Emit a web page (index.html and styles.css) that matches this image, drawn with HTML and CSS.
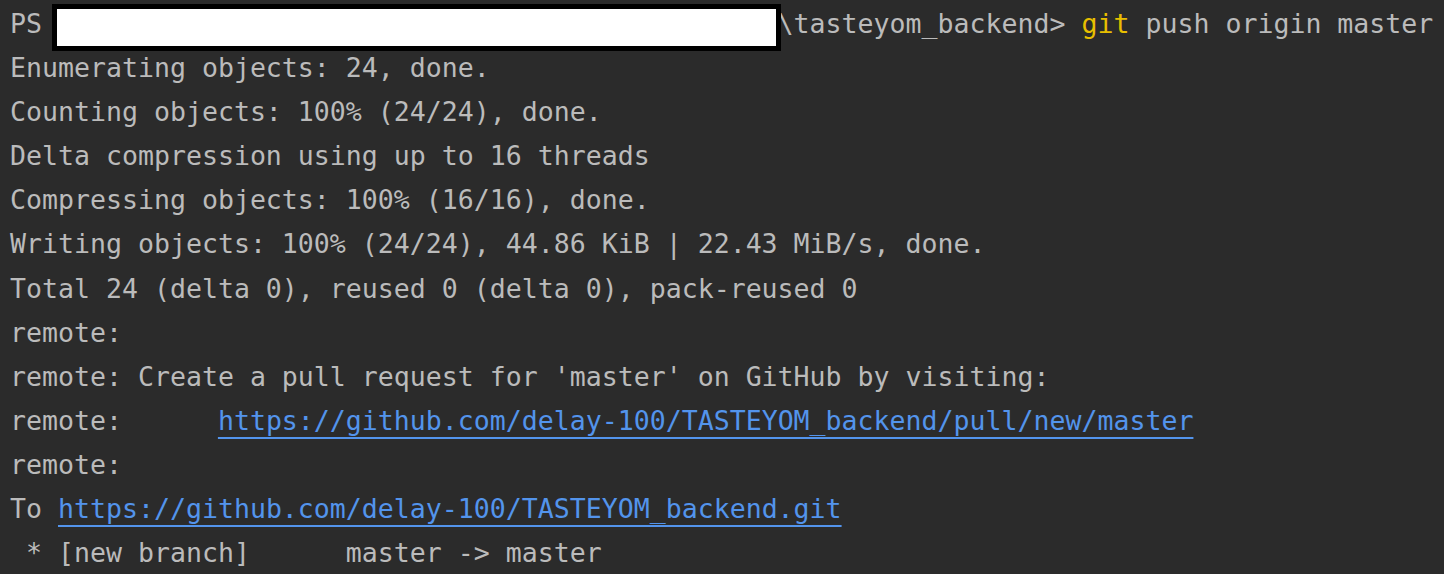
FILE: index.html
```html
<!DOCTYPE html>
<html>
<head>
<meta charset="utf-8">
<link rel="stylesheet" href="styles.css">
</head>
<body>
<div class="term">
<div class="line">PS <span class="redact"></span>                                             \tasteyom_backend&gt; <span class="cmd">git</span> push origin master</div>
<div class="line">Enumerating objects: 24, done.</div>
<div class="line">Counting objects: 100% (24/24), done.</div>
<div class="line">Delta compression using up to 16 threads</div>
<div class="line">Compressing objects: 100% (16/16), done.</div>
<div class="line">Writing objects: 100% (24/24), 44.86 KiB | 22.43 MiB/s, done.</div>
<div class="line">Total 24 (delta 0), reused 0 (delta 0), pack-reused 0</div>
<div class="line">remote:</div>
<div class="line">remote: Create a pull request for 'master' on GitHub by visiting:</div>
<div class="line">remote:      <a class="link" href="#">https://github.com/delay-100/TASTEYOM_backend/pull/new/master</a></div>
<div class="line">remote:</div>
<div class="line">To <a class="link" href="#">https://github.com/delay-100/TASTEYOM_backend.git</a></div>
<div class="line"> * [new branch]      master -&gt; master</div>
</div>
</body>
</html>
```
FILE: styles.css
```css
html, body {
  margin: 0;
  padding: 0;
  background: #2b2b2b;
}
.term {
  position: relative;
  padding: 2px 0 0 10px;
  font-family: "DejaVu Sans Mono", "Liberation Mono", monospace;
  font-size: 26.57px;
  line-height: 44.1px;
  color: #bbbbbb;
  height: 574px;
  box-sizing: border-box;
  overflow: hidden;
}
.line {
  white-space: pre;
}
.cmd {
  color: #e8bf00;
}
.link {
  color: #5394ec;
  text-decoration: underline;
  text-decoration-thickness: 2px;
  text-underline-offset: 7px;
  text-decoration-skip-ink: none;
}
.redact {
  position: absolute;
  top: 4px;
  left: 52px;
  width: 729px;
  height: 47px;
  box-sizing: border-box;
  border: 5px solid #000;
  background: #fff;
}
```
